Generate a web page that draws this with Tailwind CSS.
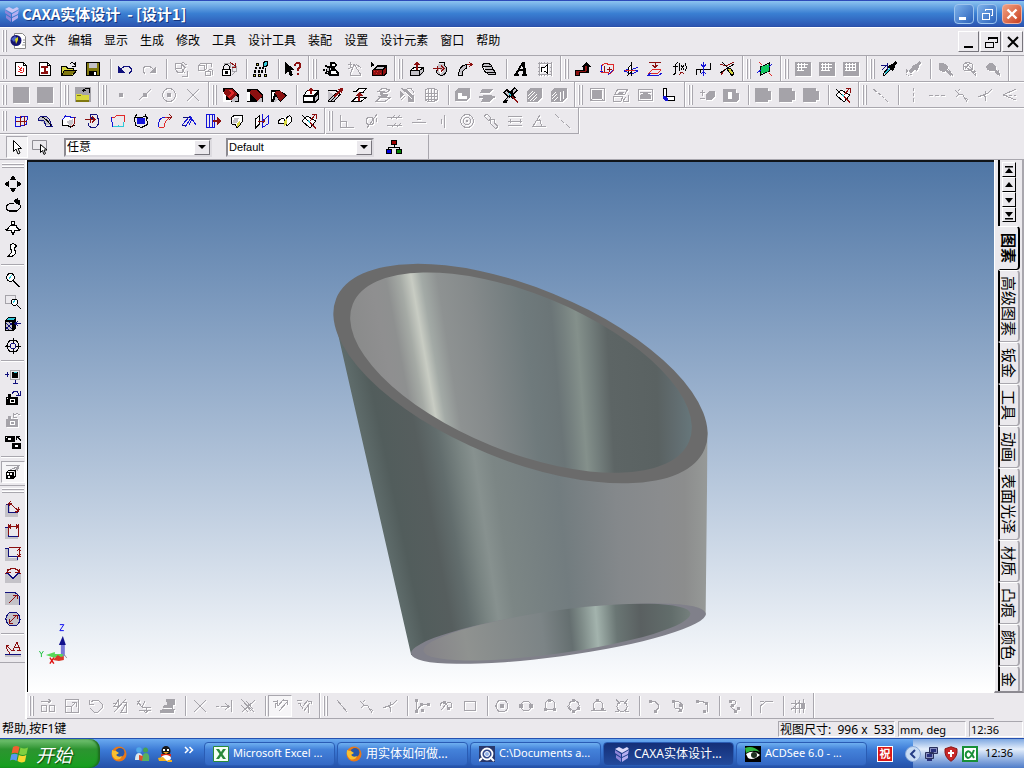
<!DOCTYPE html>
<html lang="zh-CN">
<head>
<meta charset="utf-8">
<title>CAXA实体设计 - [设计1]</title>
<script src="https://cdn.jsdelivr.net/npm/@tailwindcss/browser@4"></script>
</head>
<body class="flex h-screen flex-col overflow-hidden bg-[#ebe9ed] font-['Noto_Sans','Noto_Sans_CJK_SC',sans-serif] text-xs text-black">

<!-- Title bar -->
<header class="flex h-[27px] shrink-0 items-center bg-linear-to-b from-[#2c49b8] via-[#3878cd] via-50% to-[#2a4fa8] px-1 pr-0.5">
  <div class="-mx-1 -mr-0.5 flex h-[25px] w-full grow items-center bg-linear-to-b from-[#8cc4f0] via-[#3a7fd2] via-50% to-[#2c56b2] pr-0.5 pl-1">
    <svg class="size-4 shrink-0" viewBox="0 0 16 16"><path fill="#c9c5f5" d="M1 3l4-2 4 2 4-2 2 2-7 4z"/><path fill="#8d84d8" d="M1 4l6 4v3L1 7zM2 9l5 3v4l-5-4z"/><path fill="#b5aef0" d="M15 4L8 8v3l6-3zM14 9l-6 3v4l6-4z"/></svg>
    <h1 class="ml-0.5 font-['Noto_Sans_CJK_SC',sans-serif] text-[15px] leading-6 font-bold whitespace-pre text-white [text-shadow:1px_1px_0_#16357c]">CAXA实体设计  - [设计1]</h1>
    <div class="ml-auto flex gap-[3px]">
      <button aria-label="最小化" class="flex size-5 items-center justify-center rounded-sm border border-[#9cc4ee] bg-linear-to-br from-[#7eb2ea] to-[#2a60ba]"><svg class="size-4" viewBox="0 0 16 16"><path fill="#fff" d="M3 11h7v3H3z"/></svg></button>
      <button aria-label="还原" class="flex size-5 items-center justify-center rounded-sm border border-[#9cc4ee] bg-linear-to-br from-[#7eb2ea] to-[#2a60ba]"><svg class="size-4" viewBox="0 0 16 16" fill="none" stroke="#fff" shape-rendering="crispEdges"><path d="M6.500 5V3.500h7v6H12M3.500 7.500h7v6h-7zM6 3h8M3 7h8"/></svg></button>
      <button aria-label="关闭" class="ml-0.5 flex size-5 items-center justify-center rounded-sm border border-[#f0b0a0] bg-linear-to-br from-[#f0a080] to-[#c83c1c]"><svg class="size-4" viewBox="0 0 16 16"><path stroke="#fff" stroke-width="2.400" d="M3.500 3.500l9 9M12.500 3.500l-9 9"/></svg></button>
    </div>
  </div>
</header>

<!-- Menu bar -->
<nav class="flex h-[29px] shrink-0 items-center border-t border-b border-t-white border-b-[#a9a7ae] pb-0.5" aria-label="菜单">
  <span class="flex h-[22px] w-[9px] shrink-0 gap-px pl-0.5"><i class="w-0.5 border-r border-l border-r-[#a9a7ae] border-l-white"></i><i class="w-0.5 border-r border-l border-r-[#a9a7ae] border-l-white"></i></span>
  <svg class="ml-px size-4 shrink-0" viewBox="0 0 16 16"><path fill="#fff" stroke="#888" d="M4.500.500h8l3 3v12h-11z"/><circle cx="6" cy="7.500" r="5.500" fill="#14146e"/><path fill="#4a62c8" d="M1 6l4-3 2 2-3 4z"/><path fill="#d8d820" d="M5 6l3-2v3l-2 4z"/><path stroke="#999" d="M13 7h2M13 9.500h2M12 12h3"/></svg>
  <div class="ml-1.5 flex gap-3 whitespace-nowrap">
    <button>文件</button><button>编辑</button><button>显示</button><button>生成</button><button>修改</button><button>工具</button><button>设计工具</button><button>装配</button><button>设置</button><button>设计元素</button><button>窗口</button><button>帮助</button>
  </div>
  <div class="ml-auto flex gap-px pt-0.5 pr-px">
    <button aria-label="最小化文档" class="flex size-[21px] items-center justify-center border border-t-white border-r-[#77757c] border-b-[#77757c] border-l-white"><svg class="size-4" viewBox="0 0 16 16"><path d="M3 12h9v2H3z"/></svg></button>
    <button aria-label="还原文档" class="flex size-[21px] items-center justify-center border border-t-white border-r-[#77757c] border-b-[#77757c] border-l-white"><svg class="size-4" viewBox="0 0 16 16" fill="none" stroke="#000" shape-rendering="crispEdges"><path d="M5.500 6V3.500h9v5H12M2.500 8.500h8v5h-8zM5 4h10M2 8h9"/></svg></button>
    <button aria-label="关闭文档" class="flex size-[21px] items-center justify-center border border-t-white border-r-[#77757c] border-b-[#77757c] border-l-white"><svg class="size-4" viewBox="0 0 16 16"><path stroke="#000" stroke-width="2" d="M3 3l10 10M13 3L3 13"/></svg></button>
  </div>
</nav>

<!-- Toolbars -->
<div class="flex h-[26px] shrink-0 overflow-hidden border-b border-b-[#a9a7ae]">
  <div data-bar="newdoc newred open save | undo redo- | regen- copyobj- lockobj | tree | help"></div>
  <div data-bar="gearman sail- redbox"></div>
  <div data-bar="extrude spin sweep loft | textA stamp-"></div>
  <div data-bar="elbow bend3 axes3 planes fx dims pencilx"></div>
  <div data-bar="greenplane"></div>
  <div data-bar="grid1- grid2- grid3-"></div>
  <div data-bar="dropper dropper2- | paint1- paint2- paint3-"></div>
</div>
<div class="flex h-[26px] shrink-0 overflow-hidden border-b border-b-[#a9a7ae] shadow-[inset_0_1px_0_#fff]">
  <div data-bar="blank- blank-"></div>
  <div data-bar="catalog"></div>
  <div data-bar="dot- midpt- centre- cross-"></div>
  <div data-bar="fillet chamfer chamfer2 | shell draft offset offset2- trimsolid- mesh- | cube- slab- toolx hatch1- hatch2-"></div>
  <div data-bar="sheet- fold- sheet2- bendL"></div>
  <div data-bar="plusminus- boolhole- | bool- bool- bool- | trimx"></div>
  <div data-bar="dashdiag- | dashv- dashh- kink- fork- angle3-"></div>
</div>
<div class="flex h-[26px] shrink-0 overflow-hidden shadow-[inset_0_1px_0_#fff]">
  <div data-bar="surfgrid surfarc surfbox surfspin surfcyan surffill surfsweep surfslope surfext surffold surfmir surfjoin trimx" data-edge></div>
  <div data-bar="perp- tangent- parallel- horiz- vert- concent- slot- equal- angle- collin-" data-edge></div>
</div>
<div class="flex h-[26px] shrink-0 items-center border-b border-b-[#a9a7ae]">
  <div class="flex h-full w-[429px] items-center border-t border-r border-t-white border-r-[#a9a7ae] pl-1.5">
    <button aria-label="选择" class="flex h-[22px] w-[22px] items-center justify-center border border-t-[#a9a7ae] border-r-white border-b-white border-l-[#a9a7ae] bg-[#f4f3f5]"><svg class="size-4" viewBox="0 0 16 16"><path fill="#fff" stroke="#000" d="M4.500 1.500v11l2.500-2.500 2 5 2-1-2-4.500h3.500z"/></svg></button>
    <button aria-label="框选" class="flex h-[22px] w-6 items-center justify-center"><svg class="size-4" viewBox="0 0 16 16"><path fill="none" stroke="#8f8d94" d="M.500 1.500h14v9H.500z"/><path fill="#fff" stroke="#000" d="M8.500 5.500v8l2-2 1.500 4 1.500-1-1.500-3.500h3z"/></svg></button>
    <div class="relative ml-3 flex w-[148px]">
      <select aria-label="选择类型" class="h-[19px] w-full appearance-none border-2 border-t-[#8c8a91] border-r-[#dddbe0] border-b-[#dddbe0] border-l-[#8c8a91] bg-white pl-px font-['Liberation_Sans','Noto_Sans_CJK_SC',sans-serif] text-xs leading-none"><option>任意</option></select>
      <span class="pointer-events-none absolute top-0.5 right-0.5 flex h-[15px] w-4 items-center justify-center border border-t-white border-r-[#77757c] border-b-[#77757c] border-l-white bg-[#ebe9ed]"><svg class="h-1 w-2" viewBox="0 0 8 4"><path d="M0 0h8L4 4z"/></svg></span>
    </div>
    <div class="relative ml-3.5 flex w-[148px]">
      <select aria-label="样式" class="h-[19px] w-full appearance-none border-2 border-t-[#8c8a91] border-r-[#dddbe0] border-b-[#dddbe0] border-l-[#8c8a91] bg-white pl-px font-['Liberation_Sans',sans-serif] text-[11px] leading-none"><option>Default</option></select>
      <span class="pointer-events-none absolute top-0.5 right-0.5 flex h-[15px] w-4 items-center justify-center border border-t-white border-r-[#77757c] border-b-[#77757c] border-l-white bg-[#ebe9ed]"><svg class="h-1 w-2" viewBox="0 0 8 4"><path d="M0 0h8L4 4z"/></svg></span>
    </div>
    <button aria-label="配置树" class="ml-3 size-4"><svg class="size-4" viewBox="0 0 16 16" stroke="#000" shape-rendering="crispEdges"><path fill="#a00000" d="M5.500 1.500h5v4h-5z"/><path fill="none" d="M8 6v3M2.500 10V8.500h11V10"/><path fill="#0000e0" d="M.500 10.500h5v4h-5z"/><path fill="#008000" d="M10.500 10.500h5v4h-5z"/></svg></button>
  </div>
</div>

<!-- Work area -->
<main class="flex min-h-0 flex-1">
  <div class="flex w-[27px] shrink-0 flex-col items-center border-r-2 border-r-white pt-px">
    <div data-col="move orbit person walk | zoom zoomwin cubeleft target | lookat camera camundo- cameras | persp*"></div>
    <div data-col="dim1 dim2 dim3 dim4 dimr dimd | dimtext"></div>
  </div>

  <div class="flex min-w-0 flex-1 flex-col">
    <section class="min-h-0 flex-1 overflow-hidden border-t-2 border-l border-t-[#101418] border-l-black bg-linear-to-b from-[#4f76a5] to-white" aria-label="三维视图">
      <svg class="size-full" viewBox="28 162 966 531" preserveAspectRatio="xMidYMid meet">
        <defs>
          <clipPath id="body"><path d="M333.500 316L411 656L558 634L706 616L708 433L560 340z"/></clipPath>
          <clipPath id="inTop"><ellipse cx="521" cy="373" rx="182" ry="79" transform="rotate(22.200 521 373)"/></clipPath>
          <clipPath id="inBottom"><ellipse cx="557" cy="633" rx="135" ry="21.500" transform="rotate(-8 557 633)"/></clipPath>
        </defs>
        <g clip-path="url(#body)"><foreignObject x="330" y="260" width="380" height="410"><div class="size-full bg-[conic-gradient(from_-12.7deg_at_362px_1638px,#5e6b6a_0deg,#525d5c_0.7deg,#565e5e_2deg,#626d6d_2.8deg,#7a8583_3.6deg,#87918f_4.100deg,#7c8685_4.800deg,#727c7f_7.300deg,#84888b_9.600deg,#8a8c8e_11.400deg,#8c8d8d_12.400deg,#979a98_13.400deg,#979a98_60deg,#5e6b6a_300deg)]"></div></foreignObject></g>
        <ellipse cx="558.500" cy="634.500" rx="149" ry="22.800" transform="rotate(-7.800 558.500 634.500)" fill="#80808a"/>
        <g clip-path="url(#inBottom)"><foreignObject x="410" y="600" width="300" height="70"><div class="size-full bg-[conic-gradient(from_-12.33deg_at_282px_1282px,#858388_0deg,#8f9290_2deg,#7c8486_5.500deg,#656f70_6.800deg,#7d8a87_7.300deg,#a3b3ad_8deg,#6a7674_8.900deg,#5a6061_10deg,#626d6b_11.400deg,#75807d_12.300deg,#75807d_60deg,#858388_300deg)]"></div></foreignObject></g>
        <ellipse cx="520.500" cy="374" rx="199.400" ry="86.500" transform="rotate(22.200 520.500 374)" fill="#6b6b6b"/>
        <g clip-path="url(#inTop)"><foreignObject x="340" y="260" width="360" height="230"><div class="size-full bg-[conic-gradient(from_-12.33deg_at_352px_1622px,#8a8b8b_0deg,#8f8f90_1deg,#8e9090_1.500deg,#a5aaa5_2deg,#c8ccc3_2.400deg,#a3aaa6_2.750deg,#8e9292_3.300deg,#858a8b_4.400deg,#6f7a7c_6.200deg,#6b7577_7.200deg,#75807f_7.600deg,#84908b_8.100deg,#727d7b_8.600deg,#5d6565_9.200deg,#5a6262_11deg,#616c6f_11.700deg,#66767a_12.300deg,#66767a_60deg,#8a8b8b_300deg)]"></div></foreignObject></g>
        <!-- Axis triad -->
        <path fill="#7878d8" d="M60 645h4v12h-4z"/><path fill="#10108c" d="M62 637l3 9h-7z"/>
        <path fill="#58d858" d="M45 656l9-3v2h8v3h-8v1z"/><path fill="#d83828" d="M52 661l5-5 3 2 3-1v4l-5 1z"/>
        <path fill="none" stroke="#999" d="M63 655l3 4"/>
        <g fill="none" stroke-width="1"><path stroke="#1010f0" d="M59 625.500h4l-4 6h4"/><path stroke="#20c040" d="M38.500 652l2 3 2-3M40.500 655v3"/><path stroke="#e01010" stroke-width="1.400" d="M49 658.500l4 6M53 658.500l-4 6"/></g>
      </svg>
    </section>
    <div class="flex h-[27px] shrink-0 overflow-hidden border-t border-b border-t-white border-b-[#a9a7ae]">
      <div data-bar="bmove- bscale- brot- bmirror- boffset- bproj- | cross- extend- trim2- | constrain*- constrain2-"></div>
      <div data-bar="line- kink- fork- | poly- curve8- rect- | circ1- circ2- circ3- circ4- circ5- circ6- | arc1- arc2- arc3- | spline- | corner- | hash-"></div>
    </div>
  </div>

  <!-- Catalog browser -->
  <aside class="mb-[26px] flex w-[30px] shrink-0 flex-col overflow-hidden border-r-2 border-b-2 border-l border-r-[#a9a7ae] border-b-[#8c8a91] border-l-white pl-[3px]">
    <div class="flex h-[66px] shrink-0 flex-col border-l-2 border-l-black pt-0.5 pl-0.5">
      <button aria-label="第一个" class="flex h-[15px] w-3.5 items-center justify-center border border-t-white border-r-black border-b-black border-l-white"><svg class="size-2.5" viewBox="0 0 10 10"><path d="M1 1h8v1.500H1zM5 3l4 5H1z"/></svg></button>
      <button aria-label="上一个" class="flex h-[15px] w-3.5 items-center justify-center border border-t-white border-r-black border-b-black border-l-white"><svg class="size-2.5" viewBox="0 0 10 10"><path d="M5 2l4 5H1z"/></svg></button>
      <button aria-label="下一个" class="flex h-[15px] w-3.5 items-center justify-center border border-t-white border-r-black border-b-black border-l-white"><svg class="size-2.5" viewBox="0 0 10 10"><path d="M5 8l4-5H1z"/></svg></button>
      <button aria-label="最后一个" class="flex h-[15px] w-3.5 items-center justify-center border border-t-white border-r-black border-b-black border-l-white"><svg class="size-2.5" viewBox="0 0 10 10"><path d="M1 8h8v1.500H1zM5 7l4-5H1z"/></svg></button>
    </div>
    <div role="tablist" aria-label="设计元素" class="flex min-h-0 flex-1 flex-col overflow-hidden text-[15px] leading-[18px] [&_span]:[text-orientation:sideways] [&_span]:[writing-mode:vertical-rl] [&>button]:flex [&>button]:w-[22px] [&>button]:shrink-0 [&>button]:items-center [&>button]:justify-center [&>button]:rounded-r-sm [&>button]:border-t [&>button]:border-r-2 [&>button]:border-b [&>button]:border-l-2 [&>button]:border-t-white [&>button]:border-r-[#a9a7ae] [&>button]:border-b-[#a9a7ae] [&>button]:border-l-black [&>button]:py-[5px] [&>button]:whitespace-nowrap">
      <button role="tab" aria-selected="true" class="h-11 border-r-black! border-b-black! border-l-[#ebe9ed]! font-bold"><span>图素</span></button>
      <button role="tab"><span>高级图素</span></button>
      <button role="tab"><span>钣金</span></button>
      <button role="tab"><span>工具</span></button>
      <button role="tab"><span>动画</span></button>
      <button role="tab"><span>表面光泽</span></button>
      <button role="tab"><span>材质</span></button>
      <button role="tab"><span>凸痕</span></button>
      <button role="tab"><span>颜色</span></button>
      <button role="tab"><span>金</span></button>
    </div>
  </aside>
</main>

<!-- Status bar -->
<footer class="flex h-[19px] shrink-0 items-center pr-px pl-0.5">
  <span class="flex-1">帮助,按F1键</span>
  <div class="flex h-4 gap-[3px] leading-4 [&>span]:border [&>span]:border-t-[#a9a7ae] [&>span]:border-r-white [&>span]:border-b-white [&>span]:border-l-[#a9a7ae] [&>span]:pl-px [&>span]:leading-[15px] [&>span]:whitespace-pre">
    <span class="w-[117px]">视图尺寸:  996 x  533</span><span class="w-[68px] text-[11px]">mm, deg</span><span class="w-[54px] text-[11px]">12:36</span>
  </div>
</footer>

<!-- Taskbar -->
<div class="flex h-[30px] shrink-0 items-center border-t border-t-[#2450b0] bg-linear-to-b from-[#6aaaf0] via-[#3a78d4] via-40% to-[#2450a8] text-white">
  <button class="flex h-full w-[100px] shrink-0 items-center rounded-r-[10px] bg-linear-to-b from-[#74c474] via-[#2c9430] via-35% to-[#12a01c] pl-2.5 shadow-[inset_-2px_0_2px_#1d6a20]">
    <svg class="size-5 shrink-0" viewBox="0 0 20 20"><path fill="#f06030" d="M3 3q3-2 6.500 0L8 9.500Q5 8 1.500 9.500z"/><path fill="#80d040" d="M10.500 3.500q3.500 2 7.500 0L16.500 10Q13 12 9 10z"/><path fill="#5898f0" d="M1.300 10.500q3.500-1.500 6.500 0L6.500 17Q3 15 0 16.500z"/><path fill="#f8d830" d="M8.800 11q4 2 7.500 0L15 17.500q-4 2-7.500-.500z"/></svg>
    <span class="ml-1.5 font-['Noto_Sans_CJK_SC',sans-serif] text-lg leading-6 font-normal italic [text-shadow:1px_1px_1px_#0a4a10]">开始</span>
  </button>
  <div class="ml-[11px] flex items-center gap-[7px]">
    <button aria-label="Firefox"><svg class="block size-4" viewBox="0 0 16 16"><circle cx="8" cy="8" r="7.500" fill="#e87818"/><circle cx="9" cy="6.500" r="4.500" fill="#2858a8"/><path fill="#f8c030" d="M1 4q2 1 4 1l3 2-3 2q2 3 6 1-2 5-7 3Q0 10 1 4z"/></svg></button>
    <button aria-label="MSN"><svg class="block size-4" viewBox="0 0 16 16"><circle cx="5" cy="4" r="2.800" fill="#50a8e8"/><circle cx="11.500" cy="4" r="2.500" fill="#48a050"/><path fill="#d8e8f0" d="M1 14q0-7 4-7t4 7z"/><path fill="#58b060" d="M8 15q0-8 4-8t3 8z"/><path fill="#e05028" d="M5 9l4 1-1 5-3-1z"/></svg></button>
    <button aria-label="QQ"><svg class="block size-4" viewBox="0 0 16 16"><ellipse cx="9" cy="5" rx="4.500" ry="5" fill="#181818"/><path fill="#fff" d="M6 3h2v2H6zM10 3h2v2h-2z"/><path fill="#f0a820" d="M6 6h6l-3 2z"/><path fill="#d82818" d="M4 8h10v2.500H4z"/><ellipse cx="9" cy="12" rx="5" ry="3" fill="#fff"/><path fill="#f0b020" d="M1 12l5-1 4 4H2zM11 14h4v2h-5z"/></svg></button>
    <button aria-label="更多" class="mb-2 ml-1 flex h-3 w-2.5 items-center"><svg class="h-2 w-2.5" viewBox="0 0 10 8"><path fill="none" stroke="#fff" stroke-width="1.500" d="M1 1l3 3-3 3M5.500 1l3 3-3 3"/></svg></button>
  </div>
  <div class="ml-2.5 flex min-w-0 flex-1 gap-0.5 text-[11px] [&>button]:flex [&>button]:h-6 [&>button]:w-[131px] [&>button]:items-center [&>button]:gap-1 [&>button]:rounded-sm [&>button]:border [&>button]:border-[#2a5cb4] [&>button]:pl-2 [&>button]:whitespace-nowrap">
    <button class="bg-linear-to-b from-[#6fb0f0] via-[#4482da] via-30% to-[#3468c4]"><svg class="size-4 shrink-0" viewBox="0 0 16 16"><path fill="#f4fff4" stroke="#2a8a3a" d="M.500.500h15v15H.500z"/><path fill="#2a8a3a" d="M3 3h3l2 3 2-3h3L9.500 8 13 13h-3l-2-3-2 3H3l3.500-5z"/></svg>Microsoft Excel ...</button>
    <button class="bg-linear-to-b from-[#6fb0f0] via-[#4482da] via-30% to-[#3468c4] text-xs"><svg class="size-4 shrink-0" viewBox="0 0 16 16"><circle cx="8" cy="8" r="7.500" fill="#e87818"/><circle cx="9" cy="6.500" r="4.500" fill="#2858a8"/><path fill="#f8c030" d="M1 4q2 1 4 1l3 2-3 2q2 3 6 1-2 5-7 3Q0 10 1 4z"/></svg>用实体如何做...</button>
    <button class="bg-linear-to-b from-[#6fb0f0] via-[#4482da] via-30% to-[#3468c4]"><svg class="size-4 shrink-0" viewBox="0 0 16 16"><path fill="#28386c" d="M0 0h16v16H0z"/><circle cx="8" cy="8" r="5.500" fill="#30488c" stroke="#fff" stroke-width="1.800"/><circle cx="8" cy="8" r="2.500" fill="#90b0e8" stroke="#fff"/><path stroke="#fff" stroke-width="2" d="M11 11l4 4M0 15l3-3"/></svg>C:\Documents a...</button>
    <button class="bg-linear-to-b from-[#142f78] to-[#234a9c] text-xs"><svg class="ml-0.5 size-4 shrink-0" viewBox="0 0 16 16"><path fill="#dcd9fa" d="M1 3l4-2 4 2 4-2 2 2-7 4z"/><path fill="#8d84d8" d="M1 4l6 4v3L1 7zM2 9l5 3v4l-5-4z"/><path fill="#b5aef0" d="M15 4L8 8v3l6-3zM14 9l-6 3v4l6-4z"/></svg>CAXA实体设计...</button>
    <button class="bg-linear-to-b from-[#6fb0f0] via-[#4482da] via-30% to-[#3468c4]"><svg class="size-4 shrink-0" viewBox="0 0 16 16"><path fill="#000" d="M0 0h16v16H0z"/><path fill="#fff" d="M1 8q7-5 14 1-7 6-12 3z"/><circle cx="9" cy="9" r="3" fill="#203020"/><path fill="#30b840" d="M0 2q8-3 15 4Q8 3 1 7z"/></svg>ACDSee 6.0 - ...</button>
  </div>
  <span class="mr-5 flex size-4 shrink-0 items-center justify-center border border-white bg-[#d81818] text-[11px] leading-none font-bold">祝</span>
  <div class="flex h-full w-[111px] shrink-0 items-center gap-[3px] bg-linear-to-b from-[#7fa8e0] via-[#e4eefb] via-35% to-[#4f7cc8] text-black">
    <button aria-label="显示隐藏的图标" class="-ml-2"><svg class="block size-4" viewBox="0 0 16 16"><circle cx="8" cy="8" r="7.500" fill="#c8dcf4" stroke="#88a8d8"/><path fill="none" stroke="#243c84" stroke-width="2" d="M10 4L6 8l4 4"/></svg></button>
    <svg class="size-4" viewBox="0 0 16 16"><path fill="#8890c0" stroke="#28305c" d="M5.500 1.500h8v6h-8zM1.500 6.500h8v6h-8z"/><path fill="#28307c" d="M7 3h5v3H7zM3 8h5v3H3zM3 13h5v2H3z"/></svg>
    <svg class="size-4" viewBox="0 0 16 16"><path fill="#c82828" stroke="#881818" d="M8 .800l6 2q1 8-6 12.500Q1 11 2 2.800z"/><path stroke="#fff" stroke-width="2" d="M8 4v7M5 7h6"/></svg>
    <svg class="size-4" viewBox="0 0 16 16"><path fill="#fff" stroke="#189038" stroke-width="2" d="M1 1h14v14H1z"/><path fill="none" stroke="#189038" stroke-width="2" d="M12 4Q9 12 6 12 3 11 4 7 7 2 12 12"/></svg>
    <time class="ml-1 text-[11px]">12:36</time>
  </div>
</div>

<script>
/* Icon layers are "colour|path". A lower-case colour key strokes, an upper-case one fills. */
const INK = {k:'#000000',r:'#8c1010',b:'#1414d8',n:'#10107c',g:'#a5a3a9',w:'#ffffff',y:'#d8d840',l:'#c4c2c8',d:'#6c6a70',e:'#10c860',c:'#30c8d8',m:'#e02828',o:'#807810'};
const ICONS = {
newdoc:['新建','W|M2 1h9l3 3v11H2z','k|M2.500 1.500h8l3 3v10h-11zM10.500 1.500v3h3','m|M5 5l3 3 1-2M9 12l-4-2M10 7v4l-3 1M6 8l3 2'],
newred:['新建工程图','W|M2 1h9l3 3v11H2z','k|M2.500 1.500h8l3 3v10h-11zM10.500 1.500v3h3','R|M4 5h7v2H9v3h2v3H4v-2h3V7H4z'],
open:['打开','Y|M1 5h4l1 2h7v7H1z','k|M.500 14V5.500h5l1 2h6V9','O|M3 9h12l-4 5H1z','k|M3.500 9.500h12l-4 5H.500zM9 3q3-3 5 1M14 1v4h-3'],
save:['保存','O|M1 1h14v14H1z','k|M1.500 1.500h13v13h-13z','L|M4 2h8v5H4z','K|M4 10h8v5H4z','W|M9 11h2v3H9z'],
undo:['撤销','n|M3 9l4-3.500h5l2 2v3l-2 2','N|M1 5v7h7z'],
redo:['重做','g|M13 9L9 5.500H4l-2 2v3l2 2','G|M15 5v7H8z'],
regen:['重新生成','g|M3 2.500h5l4 4-3 5H5L2 8zM8 3v5M2 8l6-1 4 5M9 1l5 3M14 10v5H9'],
copyobj:['复制对象','g|M1.500 4.500h6v5h-6zM1.500 4.500l2-2h6v5l-2 2M8.500 10.500h5v4h-5zM11 10l2-2 2 1v5M10 2h4v4'],
lockobj:['锁定','g|M3.500 5V2.500h6v4M11 10.500h4v-5h-4zM11 13.500l3-2','r|M9 1l5 4M14.500 2v4h-4','W|M1 8h9v7H1z','k|M1.500 8.500h8v6h-8zM2.500 8V5.500l2-2h2l2 2V8','K|M4 10h3v3H4z'],
tree:['浏览树','K|M3 2h3v3H3zM2 6h2v2H2zM6 6h2v2H6zM1 9h2v3H1zM5 9h2v3H5zM8 9h2v3H8zM0 13h3v3H0zM5 13h3v3H5zM11 13h3v3h-3zM9 6h2v2H9z','Y|M4 3h1v1H4zM1 14h1v1H1zM6 14h1v1H6zM12 14h1v1h-1z','C|M11 0h4v5h-4z','k|M10.500 1.500l2-1h2v4l-2 1h-2zM12 7v5'],
help:['帮助','K|M0 1v12l3-3 2 5 3-1-2-5h4z','R|M9 3l2-2h3l2 2v3l-2 2v2h-2V7l2-2V3h-3v2H9zM12 12h2v2h-2z'],
gearman:['机械','K|M7 1h5l2 3-2 3 4 5v3H6l-2-2 4-5-1-3z','W|M9 3h3v2H9zM8 10h5l1 3H8z','K|M2 4h2v2H2zM0 8h2v2H0zM2 11h2v2H2zM4 5h3v6H3z','L|M4 7h2v3H4z'],
sail:['渲染','g|M7 3l7 11M7 3L3 14M3 14.500h11M1 3h4M3 1v5M5 6L1 8M9 3l5 4'],
redbox:['零件库','K|M0 1l4 3-4 2zM2 9l4-5h9l1 1v7l-3 3H1V9z','R|M2 9h9v5H2zM12 9l3-3v6l-3 2z','M|M3 10h1v1H3zM6 10h1v1H6zM9 12h1v1H9zM5 12h1v1H5z','L|M6 6h7l-1 2H5z'],
extrude:['拉伸','L|M1 10l4-3h9v5l-3 3H1z','W|M2 9l3-2h8l-2 2z','k|M1.500 9.500h9v5h-9zM2 9l3-2.500h9.500v4l-4 4M11 9l3-2','R|M7 3h2v6H7zM5 4l3-4 3 4z'],
spin:['旋转','L|M5 3h7l2 6-2 6H6L3 11z','k|M5.500 1.500h6v2q0 1 2 3 1 7-5 8-6-1-5-5','W|M6 8l4 2-3 3z','r|M0 7.500h9M8 4.500l3 3-3 3M4 5v5'],
sweep:['扫描','L|M2 13Q3 5 9 4v4q-4 1-3 6z','k|M1.500 14Q2 5 9 3.500v4Q5 9 5.500 14z','r|M10 3.500h5M12 1l3 2.500L12 6'],
loft:['放样','L|M1 3q5-3 9 0l5 9q-4 3-8 1Q4 6 1 3z','k|M1 4q5-4 9 0l5 9q-4 2-8 0-5-3-6-9zM2 5h8M4 8h8M6 11h8M10 4l5 9'],
textA:['文字','K|M9 1h3l1 12h1v2H9v-2h1v-3H6l-1 3h1v2H1v-2h1zM9 4L7 8h3z'],
stamp:['图章','g|M2 1v14M14 1v14M1 2.500h14M1 13.500h14M4 1v2M7 1v2M10 1v2M4 13v2M7 13v2M10 13v2M1 6h2M1 10h2M13 6h2M13 10h2','W|M4 6h4l3-3v9l-3-2H4z','k|M4.500 11V6.500h3l3-3v9l-3-2.500'],
elbow:['管道','K|M0 9h8V6H7l4-5 5 5h-2v6H5v3H0z','R|M1 10h9V5h2v5l-2 1H4v3H1z'],
bend3:['三维球','m|M2 5l5-3 3 2 4-1 1 6-4 4-3-2-5 1z','r|M5 5v6M8 8h5M10 6v5','b|M2 4v5M9 14l5-5M1 11l3-1'],
axes3:['基准','b|M8 9l7-3M1 10l4-2 10 2-6 3z','k|M8.500 1v14','W|M6 6l3-3v7l-3 3z','k|M5.500 6.500L8 4v7l-3 3z','m|M2 9.500h10'],
planes:['基准面','r|M2 1.500h12M8 2v4M5.500 4L8 6.500 10.500 4','m|M5 8.500h9M5 9l-3 3h9l3-3','b|M4 12l-4 2.500h11l4-2.500'],
fx:['公式','k|M2 13.500h1l1-1V7l1-4 2-1.500M2 5.500h5M9 2L8 5v3l1 2M14 2l1 3v3l-1 2M10 4l3 5M13 4l-3 5','r|M8 14l3-3 2 2M9 11h3'],
dims:['尺寸','k|M1 14V8.500h4v3M15 2v6.500h-5M5 8.500h8','b|M8.500 1v14M6 3.500L8.500 6 11 3.500M6 13l2.500-2.500L11 13'],
pencilx:['草图修剪','r|M1 3l6 2 8-4M2 14l4-6','k|M1 12l14-9M3 1l7 7','Y|M8 8l3-1 4 5-2 3z','k|M8 8l5 7 2-3-4-5z'],
greenplane:['参考面','k|M3.500 6l9-4v8l-9 4z','E|M4 6l8-3v7l-8 3z','m|M2 1l3 3M12 12l3 3','b|M0 12l4-3M12 6l3-3'],
grid1:['网格一','G|M0 1h16v14H0z','w|M2 3.500h11M2 6.500h10M2 9.500h7M3.500 2v8M6.500 2v8M9.500 2v5'],
grid2:['网格二','G|M0 1h16v14H0z','w|M2 3.500h11M2 6.500h11M2 9.500h9M3.500 2v8M6.500 2v8M9.500 2v8'],
grid3:['网格三','G|M0 1h16v14H0z','w|M2 3.500h11M2 6.500h11M2 9.500h11M3.500 2v8M6.500 2v8M9.500 2v8M12.500 2v8'],
dropper:['提取','K|M8 4l4-1 2-3 2 2-2 3-1 4-2 1-4-5z','k|M8 6l-6 7v2l2-1 7-7','C|M8 7l1 1-5 5-1-1z','n|M0 4.500h6M6.500 2v7M1 9l5-5'],
dropper2:['应用','G|M8 4l4-1 2-3 2 2-2 3-1 4-2 1-4-5zM1 13l7-8 3 2-8 8zM1 8v6h6z'],
paint1:['涂色','G|M2 2h3l4 1 2 3-1 4-4 1-4-2zM9 8l6 6-2 1-5-5z','g|M11 8l4 5v2'],
paint2:['纹理','g|M2 4l4-3 5 2 1 5-4 2-5-1zM3 5l6 4M5 2l6 6M9 2L4 8M9 8l5 6M13 9l2 6M11 11l4-1'],
paint3:['凸痕','G|M1 5q5-6 9-1 3 5-3 6-6 0-6-5zM9 9l2-1 4 6h-2z','g|M9 9l4 5M13 9l2 6'],
blank:['空','G|M0 0h16v16H0z'],
catalog:['目录','G|M0 0h16v15H0z','Y|M1 7h5l1 1h7v7H1z','O|M1 13h13v2H1zM2 8h4v1H2z','k|M8.500 5V3l2-1.500h3M14.500 1v5M7 3.500h4'],
dot:['点','G|M6 6h4v4H6z'],
midpt:['中点','G|M6 6h4v4H6z','g|M2 13l4-4M10 6l4-4'],
centre:['圆心','g|M8 1.500a6.500 6.500 0 1 0 .01 0z','G|M6 6h4v4H6z'],
cross:['交点','g|M2 2l12 12M14 2L2 14'],
fillet:['圆角过渡','K|M0 1h10l6 7v7H0z','W|M0 5h3v10H0zM3 13h5v2H3z','L|M8 13l3-6 4 3v4l-6 1z','R|M2 2h7l5 5-6 7-7-8z','M|M5 3h3l3 3-5 5-1-2 4-3z'],
chamfer:['边倒角','K|M0 2h10l6 5v8H0z','W|M0 5h3v9H0z','L|M10 11h5v4h-5z','R|M4 3h6l5 6-5 5-7-8z'],
chamfer2:['倒角','K|M0 3h8l8 5-7 7-3-4-3 4H0z','W|M1 5h3l-3 8z','L|M5 9l2 3-2 3H3z','R|M5 4h4l5 5-5 5-5-8z'],
shell:['抽壳','K|M0 9l4-6h12v9l-4 4H0z','W|M4 4h10l-3 4H2zM1 10h9v4H1z','L|M12 10l3-3v4l-3 3z','R|M7 3h2v4H7zM5 4l3-4 3 4z'],
draft:['拔模','L|M1 4l9 6-5 5H1z','k|M1 3.500h8l4 4-6 7H1M1 14l8-8M4 14l6-6','R|M7 9l5-6-2-1 6-1-1 6-2-2-5 6z'],
offset:['偏移','W|M3 4l4-3h8l-3 4zM1 14l4-3h10l-3 4z','k|M2 4.500h3l3-3h7l-3 4H9M1 14.500l4-4h10l-5 4z','R|M7 8h2v6H7zM4 9l4-4 4 4z'],
offset2:['加厚','g|M3 4.500L8 1l7 2-4 3zM1 14.500l4-4h10l-5 4zM3 9h9l-3 2','G|M4 4h6l-2 3h5v2H6z'],
trimsolid:['裁剪','G|M1 1l6 1 8 6v7H9V9zM1 4l4 4-4 3z','g|M8 1h4l3 5M2 13l4-4','w|M6 5l7 7M9 3l5 5'],
mesh:['网格体','g|M2 3q6-4 12 0v10q-6 4-12 0zM2 6h12M2 9h12M5 2v13M8 1v14M11 2v13M2 12h12'],
cube:['布尔','G|M0 4l4-3h11v9l-4 4H0z','W|M3 6h4v3h5v3H3z'],
slab:['截面','G|M3 2h11l-3 4H1zM0 9h16v2H0zM4 11h10l-3 4H2z','g|M4 8h9'],
toolx:['分割','K|M0 5l4-3 3 3 4-5 4 3-5 5 3 3-3 1-3-2-5 8-3-2 5-6z','L|M2 5l2-1 3 4-2 1zM10 3l2-1 1 1-3 4zM3 12l2-2 1 1-2 3z','C|M6 6l2 2-1 1-2-2z','R|M9 9l6 6-1 1-6-6z'],
hatch1:['剖面','G|M0 4l4-3h11v9l-4 5H0z','w|M1 9l5-5M1 12l7-7M3 14l7-7M6 14l4-4'],
hatch2:['剖视','G|M0 4l4-3h12v9l-4 5H0z','w|M1 9l4-4M1 12l5-5M3 14l4-4M9 5v9M12 4v8'],
sheet:['板料','G|M3 3h10v9H3z','g|M1 1.500h14v12H1zM1 14l2-2M15 14l-2-2'],
fold:['弯折','g|M5 2h10l-3 5H2zM1 9h9l-2 5H0zM15 8v6h-5M10 14l3-4','G|M3 8h5l3-3H6z'],
sheet2:['冲孔','g|M1.500 2.500h14v11h-14z','G|M3 8q5-4 11 0v4H3z','g|M3 5h11'],
bendL:['折弯板','W|M3 1h3v9h7v4H6l-3-3z','k|M2.500 1.500h3v8h8v4H6l-3.500-3.500z','B|M2 9h2l3 3v2H4l-2-2z'],
plusminus:['增减料','g|M1 5.500h5M3.500 3v6M1 11.500h5','G|M7 7l3-3h6v5l-3 4H7z'],
boolhole:['挖孔','G|M0 2h13v4h3v6l-3 3H0z','W|M5 5h4v7H5z'],
bool:['实体','G|M0 1h13v3h3v9h-3v2H0z'],
trimx:['修剪曲面','W|M2 8l5-6 8 5-6 8z','k|M1 8l5-5 9 5-6 7zM1 2l13 13M1 8l8 7','r|M11 1.500h4v4M15 1l-6 7','C|M7 7l2 2-1 1-2-2z','R|M9 9l6 6-1 1-6-6z'],
dashdiag:['构造线','g|M0 2l4 3M5 6l3 2M9 9l2 2M12 12l3 3'],
dashv:['垂直线','g|M8 1v3M8 6v3M8 11v4'],
dashh:['水平线','g|M0 8h4M6 8h4M12 8h4'],
kink:['切线','g|M2 3l4 4h4M10 8l4 7M5 4l2-2M3 10l3-3','g|M13 11l2 2'],
fork:['法线','g|M1 10l5-2 5-2 4-4M6 8q3 1 3 6M8 7V4'],
angle3:['角平分线','g|M15 2L2 8l13 5M3 8h3M8 8h3M13 8h2'],
surfgrid:['网格面','b|M2.500 4l5 1 2-2h5l-1 8-5 2-6 1z','r|M7.500 3v10M3 9l11-1M11 3v10'],
surfarc:['直纹面','L|M1 6l3-3h5l6 9H9z','n|M1 6l3-3h5l3 3 3 7H9L7 8 1 7z','k|M5 4q6 3 9 9'],
surfbox:['边界面','W|M1 7l4-4 8 1-1 8H2z','b|M1.500 7l3-4 5 1h5','k|M1.500 7v5h4l4 2 4-2','r|M14 4l-1 7-3 3','L|M5 9l7-3v5l-3 2z'],
surfspin:['旋转面','n|M5 1.500h7M5 2q0 3 3 4M12 2q0 3 2 5 0 7-6 8-5-1-5-5','r|M0 6.500h9M7 3.500l3 3-3 3M5 4v6'],
surfcyan:['拟合面','m|M3 4h3l2-2h7v7','b|M2 4l2 10','c|M4 14q6-2 10 0l1-5'],
surffill:['填充面','k|M1.500 4.500h5l7-1 1 8-6 3-6-2zM4 1l-3 5M12 1l3 5','B|M4 5h8v6H4z'],
surfsweep:['扫描面','b|M2 14Q0 5 8 4','m|M2 14h5q1-6 4-8V4H8','r|M10 4h5M12 1l3 3-3 3'],
surfslope:['导动面','b|M1 12l8-9 6 9M4 14l6-9M8 12l3-6','n|M2 4h7M1 12h3'],
surfext:['延伸面','b|M1.500 1.500h8v13h-8zM4.500 2v12M7 2v12','R|M8 7h4V4l4 4-4 4V9H8z'],
surffold:['偏移面','W|M3 4l4-2 8 1-3 9-4 1-3-3-3-1z','k|M2 5l4-3h8l-1 7-5 6-2-4H3z','L|M5 5h5l-2 5H4z','Y|M8 10l3-3v4l-3 4z'],
surfmir:['镜像面','W|M2 7l4-4v9l-4 3z','k|M2.500 6l4-3v8l-4 4z','b|M9.500 1v14M10 8l5-5v8l-5 3','r|M5 8h7M10 6l2 2-2 2'],
surfjoin:['缝合面','W|M1 8l5-4 8 0v5l-5 4-4-3z','k|M1 9q3-5 6-3v5q-3-2-5 0zM9 6q3-5 5-2v5l-4 4z','Y|M7 8l3-2v5l-3 2z'],
perp:['垂直','g|M1.500 2v12h13M2 8.500h5v5'],
tangent:['相切','g|M7 4a4 4 0 1 0 .01 0zM14 1L4 15M13 5v4'],
parallel:['平行','g|M0 4.500h15M0 12.500h15M4 6l4-4M5 14l4-4M9 6l4-4M10 14l4-4'],
horiz:['水平','g|M1 9.500h14M6 6.500h4'],
vert:['竖直','g|M9.500 2v13M6.500 6v5'],
concent:['同心','g|M8 1.500a6.500 6.500 0 1 0 .01 0zM8 4.500a3.500 3.500 0 1 0 .01 0z','G|M7 7h2v2H7z'],
slot:['镜像','g|M1 3l3-2 4 4-2 3zM7 6h4v4l4 3-2 3-5-5z'],
equal:['等长','g|M1 3.500h14M1 12.500h14M1 8h14M3 6v4M13 6v4'],
angle:['角度','g|M1 13.500h14M2 13l7-11M8 6l3 7M5 7h5'],
collin:['共线','g|M0 1l4 4M6 7l3 3M11 11l4 4'],
move:['平移','K|M7 0h2l2 4H5zM7 16h2l2-4H5zM0 7l4-2v6L0 9zM16 7l-4-2v6l4-2z'],
orbit:['动态旋转','K|M8 3l5-3v2h2v4h-3l1 2z','k|M11 5l4 2v3l-3 3H4l-3-2V8l3-2 5-1M2 12h11'],
person:['前后','W|M6 1h4v5l5 4-5 2-2 3-3-3-4-2 4-4z','k|M6.500 1.500h3v3h-3zM4.500 5.500h7M5 6l-3 4h4l2 5 2-5h4l-3-4M0 9.500h3M13 9.500h3'],
walk:['漫游','W|M8 1l4 3-2 3 2 4-5 4H3l4-5-2-5z','k|M5 3.500L8 1l4 3-3 2 2 5-4 3.500H3L7 10 5 5z'],
zoom:['缩放','W|M2 2h7v7H2z','k|M5.500 1.500a4 4 0 1 0 .01 0zM8 9l6 6M9 9l6 6','c|M4 7l3-4'],
zoomwin:['窗口缩放','g|M.500 1.500h10v8h-10z','W|M7 6h5v5H7z','k|M9.500 5a3.200 3.200 0 1 0 .01 0zM12 11l4 4','c|M8 9l2-3'],
cubeleft:['显示零件','K|M0 5l3-4h8v11l-3 3H0z','C|M3 2h7L8 4H2z','L|M1 6h6v8H1z','n|M1 7l6 6M1 11l3 3M7 7l-6 6M4 6l3 3M10 7.500h6M13 5l-3 2.500L13 10'],
target:['定位','k|M8 2a6 6 0 1 0 .01 0zM8 0v5M8 11v5M0 8h5M11 8h5','n|M8 5a3 3 0 1 0 .01 0z'],
lookat:['指定面','g|M5.500 2.500h9v9h-9z','K|M7 4h6v6H7z','C|M9 4h3v1H9z','n|M0 6.500h4M2 4v5M8 15h5M10.500 12v4'],
camera:['相机','K|M1 7h12v8H1zM3 4h3v3H3z','W|M5 9h5v4H5zM2 8h1v1H2z','K|M6 10h3v2H6z','n|M7 3.500l2-2h3l2 3M15 1v4h-4'],
camundo:['撤销相机','G|M1 7h12v8H1zM3 4h3v3H3z','W|M5 9h5v4H5z','G|M6 10h3v2H6z','g|M8 4q3-4 7-1M8 1v4h4'],
cameras:['相机组','K|M0 2h10v6H0zM7 9h9v6H7zM11 2h4v1h-2l3 3-1 1-3-3v2h-1z','W|M3 4h3v2H3zM10 11h3v2h-3zM1 3h1v1H1z'],
persp:['透视','g|M1 1.500h14M5 6l9-4M9 8l5-6M12 7l2-5','K|M1 8h8v7H1z','W|M2 9h2v2H2zM5 9h2v2H5zM3 12h2v2H3z','k|M2 8l2-1.500h6v6l-2 2'],
dim1:['智能标注','L|M0 4h5v8h8v4H0z','n|M.500 3.500h3v8H13','r|M4 1.500l9 8M2 4l4-4M11 12l4-4M4 5V2h3M13 6v4h-3'],
dim2:['水平标注','L|M0 4h4v9h9v3H0z','n|M0 4h3.500v9.500h9','r|M3.500 1v11M13.500 1v13M4 3.500h9M6 1.500l-2 2 2 2M11 1.500l2 2-2 2'],
dim3:['垂直标注','L|M0 3h4v10h9v3H0z','n|M0 3.500h3.500v8h9v3','r|M4 2.500h12M12 11.500h4M14 3v8M12 6l2-2 2 2M12 9l2 2 2-2'],
dim4:['角度标注','L|M0 7h4l4 5 5-5h3v9H0z','n|M0 6.500h3l5 5 5-5h3','r|M2 4q6-5 12 0M2 2v3h4M14 2v3h-4M0 7l3-3M16 7l-3-3'],
dimr:['半径标注','L|M0 3h10q6 1 5 13H0z','n|M0 3.500h10l4 3 1 9','r|M4 14l8-8M8 6h4v4'],
dimd:['直径标注','L|M8 1a7 7 0 1 0 .01 0z','n|M8 1a7 7 0 1 0 .01 0z','r|M4 12l8-8M8 4h4v4M4 8v4h4'],
dimtext:['文字标注','r|M8 9l4-8 3 8M9 6h5M6 9.500h4M12 9.500h4M1 4l6 6M1 8V4h3M2 8l3 5','n|M0 13.500h16','L|M0 14h16v2H0z'],
bmove:['移动','g|M1 3h9M8 1l3 2-3 2M1.500 7.500h5v6h-5zM9.500 7.500h5v6h-5z'],
bscale:['缩放图形','g|M1.500 1.500h13v13h-13zM1.500 8.500h6v6M7 9l5-5M8 4.500h4v4'],
brot:['旋转图形','g|M3 4l3-2h4l4 4v4l-4 4H6l-4-4M1.500 2v4h4'],
bmirror:['镜像图形','g|M2 8.500l4-6v6zM9 14l5-8v8zM2 14L14 1M1 5h4M10 4h4'],
boffset:['等距','g|M1 3l5 6h9M3 12h12M9 3l-3 6M1 7l3-5M10 9v6M8 13l2 2 2-2'],
bproj:['投影','G|M6 1h9v6H7zM3 8h9v2H3zM0 12h14v3H0z','g|M4 7h9M2 11h13M12 2v12'],
extend:['延伸','g|M0 8.500h3M5 8.500h8M9 5l4 3.500-4 3.500M15 2v12'],
trim2:['剪裁','g|M1 1l13 13M2 14L15 2M1 7l7 7M6 3l7 8M3 3l8 10'],
constrain:['显示约束','g|M1 3h5M5 2l1 6M4 6l-1 4M7 13l8-9M6 8l6-7M10 2h5v5M3 5h2'],
constrain2:['显示端点','g|M1 2.500h5M4 6l3 5M8 13l6-8M7 8l5-6M12.500 8v7M12 3h3v3M2 5h3'],
line:['直线','g|M3 2l10 12'],
poly:['连续线','g|M2.500 3v10M3 12l5-6h7','G|M1 1h3v3H1zM1 12h3v3H1zM6 5h3v3H6zM13 5h3v3h-3zM7 11h3v3H7z'],
curve8:['曲线','g|M2 8q0-4 4-3t4 5q4 1 4-4-3-4-6 0T3 12','G|M5 3h3v3H5zM9 9h3v3H9z'],
rect:['矩形','g|M2.500 3.500h11v9h-11z'],
circ1:['圆','g|M8 2a6 6 0 1 0 .01 0z','G|M6 6h4v4H6z'],
circ2:['两点圆','g|M8 3a5 5 0 1 0 .01 0z','G|M1 6h4v4H1zM11 6h4v4h-4z'],
circ3:['三点圆','g|M8 2a5 5 0 1 0 .01 0z','G|M6 1h3v3H6zM2 10h3v3H2zM11 10h3v3h-3z'],
circ4:['相切圆','g|M8 2.500a5 5 0 1 0 .01 0zM1 8l4 5','G|M6 1h3v3H6zM11 9h3v3h-3zM6 13h3v2H6z'],
circ5:['双切圆','g|M8 3a5 5 0 1 0 .01 0zM1 12.500h4M11 12.500h5','G|M6 1h3v3H6zM3 10h2v2H3zM11 10h3v3h-3z'],
circ6:['三切圆','g|M8 3.500a5 5 0 1 0 .01 0zM2 1l3 4M14 1l-3 4M1 13h4M11 13h4','G|M4 4h2v2H4zM10 4h2v2h-2z'],
arc1:['圆弧','g|M4 3.500h5l3 3v4l-3 3','G|M3 2h3v3H3zM8 12h3v3H8z'],
arc2:['两点弧','g|M3 3h5l4 3v5l-4 3M4 4l1 6h5','G|M2 2h3v3H2zM9 11h3v3H9zM9 6h3v3H9z'],
arc3:['三点弧','g|M3 3.500h6l4 3v7','G|M2 2h3v3H2zM11 4h3v3h-3zM9 12h3v3H9z'],
spline:['样条','g|M4 5q2-4 5-2 2 3-2 4t0 4q4 3 6-1','G|M3 2h3v3H3zM5 6h3v3H5zM11 9h3v3h-3zM8 12h3v3H8z'],
corner:['圆角','g|M2.500 15V8l5-4.500h7M2 3.500h4'],
hash:['阵列','g|M1 5h14M1 10h14M5 2v13M9 2v13M13 1v14M1 12L10 3','G|M11 6h4v5h-4z']
};
function drawing(name) {
  const layers = ICONS[name].slice(1).map(s => {
    const [key, d] = s.split('|'), c = INK[key.toLowerCase()];
    return key === key.toLowerCase() ? `<path fill="none" stroke="${c}" d="${d}"/>` : `<path fill="${c}" d="${d}"/>`;
  });
  return layers.join('');
}
function fill(box, list, across) {
  const grip = across
    ? '<span class="mr-0.5 flex h-5 w-[7px] gap-px pl-0.5"><i class="w-0.5 border-r border-l border-r-[#a9a7ae] border-l-white"></i><i class="w-0.5 border-r border-l border-r-[#a9a7ae] border-l-white"></i></span>'
    : '<span class="mb-1 flex h-2 w-[22px] flex-col gap-px pt-0.5"><i class="h-0.5 border-t border-b border-t-white border-b-[#a9a7ae]"></i><i class="h-0.5 border-t border-b border-t-white border-b-[#a9a7ae]"></i></span>';
  box.innerHTML = grip + list.split(' ').map(t => {
    if (t === '|') return across ? '<span class="mr-px ml-[5px] h-5 w-0.5 border-r border-l border-r-white border-l-[#a9a7ae]"></span>' : '<span class="my-[3px] h-0.5 w-[23px] border-t border-b border-t-[#a9a7ae] border-b-white"></span>';
    const name = t.replace(/[*-]/g, ''), off = t.includes('-'), on = t.includes('*');
    const press = on ? 'flex h-[22px] w-6 shrink-0 items-center justify-center border border-t-[#a9a7ae] border-l-[#a9a7ae] border-r-white border-b-white bg-[#f6f5f7]' : 'flex h-[22px] w-6 shrink-0 items-center justify-center';
    const art = off ? 'size-4 shrink-0 drop-shadow-[1px_1px_0_#fff]' : 'size-4 shrink-0';
    return `<button type="button" aria-label="${ICONS[name][0]}" class="${press}"><svg class="${art}" viewBox="0 0 16 16" shape-rendering="crispEdges">${drawing(name)}</svg></button>`;
  }).join('');
}
document.querySelectorAll('[data-bar]').forEach(b => {
  b.className = 'edge' in b.dataset
    ? 'flex shrink-0 items-center border-r border-b border-r-[#a9a7ae] border-b-[#a9a7ae] pr-[3px] mr-px shadow-[1px_0_0_#fff]'
    : 'flex shrink-0 items-center border-r border-r-[#a9a7ae] pr-[3px] mr-px shadow-[1px_0_0_#fff]';
  fill(b, b.dataset.bar, true);
});
document.querySelectorAll('[data-col]').forEach(b => {
  b.className = 'flex w-[25px] flex-col items-center border-b border-b-[#a9a7ae] pb-0.5';
  fill(b, b.dataset.col, false);
});
</script>
</body>
</html>
